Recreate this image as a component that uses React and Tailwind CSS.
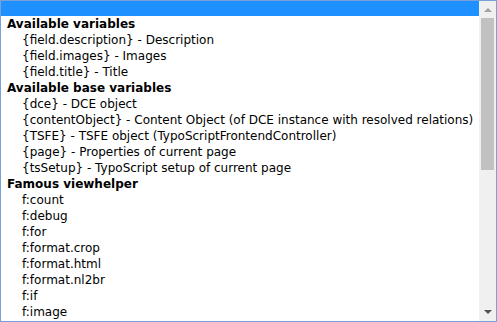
const groups = [
  {
    label: "Available variables",
    items: [
      "{field.description} - Description",
      "{field.images} - Images",
      "{field.title} - Title",
    ],
  },
  {
    label: "Available base variables",
    items: [
      "{dce} - DCE object",
      "{contentObject} - Content Object (of DCE instance with resolved relations)",
      "{TSFE} - TSFE object (TypoScriptFrontendController)",
      "{page} - Properties of current page",
      "{tsSetup} - TypoScript setup of current page",
    ],
  },
  {
    label: "Famous viewhelper",
    items: [
      "f:count",
      "f:debug",
      "f:for",
      "f:format.crop",
      "f:format.html",
      "f:format.nl2br",
      "f:if",
      "f:image",
    ],
  },
];

export default function App() {
  return (
    <div className="w-[497px] h-[322px] border border-[#7a9fd9] bg-white flex overflow-hidden font-['DejaVu_Sans',sans-serif] text-[12px] text-black">
      <div className="flex-1 flex flex-col overflow-hidden">
        <div className="h-[15px] shrink-0 bg-[#1e90ff]" />
        {groups.map((g) => (
          <div key={g.label}>
            <div className="h-4 leading-4 pl-[6px] font-bold whitespace-nowrap">{g.label}</div>
            {g.items.map((it) => (
              <div key={it} className="h-4 leading-4 pl-[21px] whitespace-nowrap">
                {it}
              </div>
            ))}
          </div>
        ))}
      </div>
      {/* scrollbar */}
      <div className="w-[17px] shrink-0 bg-[#f0f0f0] flex flex-col items-center">
        <div className="h-[17px] w-full flex items-center justify-center">
          <svg width="8" height="5" viewBox="0 0 8 5">
            <path d="M0 5 L4 1 L8 5 Z" fill="#a3a3a3" />
          </svg>
        </div>
        <div className="w-[13px] h-[152px] bg-[#c1c1c1]" />
        <div className="flex-1" />
        <div className="h-[17px] w-full flex items-center justify-center">
          <svg width="8" height="5" viewBox="0 0 8 5">
            <path d="M0 0 L4 4 L8 0 Z" fill="#505050" />
          </svg>
        </div>
      </div>
    </div>
  );
}
